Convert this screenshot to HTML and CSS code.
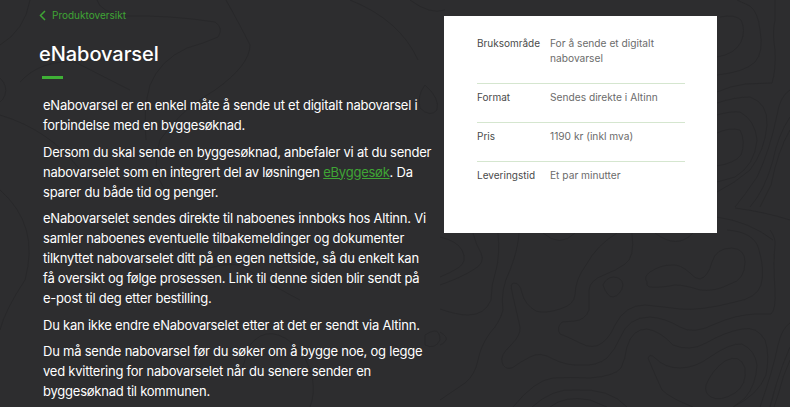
FILE: index.html
```html
<!DOCTYPE html>
<html lang="no">
<head>
<meta charset="utf-8">
<title>eNabovarsel</title>
<link rel="stylesheet" href="styles.css">
</head>
<body>
<svg class="topo" viewBox="0 0 790 407" width="790" height="407" aria-hidden="true">
<path d="M440 237Q457 241 462 250Q468 262 458 268Q450 273 440 277"/>
<path d="M473 233Q476 245 481 253Q486 263 473 270Q460 278 440 285"/>
<path d="M498 233Q500 255 496 270Q491 285 491 300Q485 315 468 315Q457 315 440 309"/>
<path d="M519 233Q518 250 510 270Q500 290 503 310Q500 322 490 333Q481 345 478 360Q475 375 465 383L440 400"/>
<path d="M440 332Q448 337 446 340Q444 344 440 345"/>
<path d="M543 233Q560 248 575 233"/>
<path d="M655 233Q677 250 693 233"/>
<path d="M617 233Q597 245 586 265Q575 280 575 295Q574 305 560 309Q545 314 536 311Q525 305 522 293Q520 283 514 283Q510 283 512 292L520 327Q521 335 511 345Q500 355 502 362Q504 370 512 368Q520 362 530 357Q540 351 553 359Q567 366 582 365Q597 366 607 358Q615 350 620 338Q628 317 650 317Q665 318 680 327Q693 335 715 324Q735 315 755 314L771 314Q776 310 775 290Q773 262 775 245Q776 238 770 230"/>
<path d="M632 233Q635 258 625 264Q617 270 604 275Q590 280 589 290L589 310Q585 320 575 321L562 322Q556 328 560 334Q566 336 580 343Q593 350 602 343Q610 337 615 325Q625 305 645 305Q665 307 680 309Q700 311 735 302Q757 298 761 285Q765 270 759 250Q755 232 727 230"/>
<path d="M513 407Q535 380 553 378Q570 377 590 378Q615 376 621 368Q625 360 627 347Q632 329 647 329Q660 331 673 345Q690 352 706 343Q725 332 742 329Q757 326 765 340Q770 355 766 375Q758 395 733 407"/>
<path d="M693 407Q670 398 662 390Q655 375 648 358Q650 353 655 358Q665 368 680 368Q695 368 710 357Q730 343 742 344Q755 350 757 365Q756 385 745 398L733 407"/>
<path d="M706 385Q712 370 725 361Q740 353 745 368Q747 385 735 393Q720 402 711 397Q704 393 706 385Z"/>
<path d="M647 282Q643 277 650 272Q660 265 672 265Q680 264 690 273Q695 279 700 279Q708 277 712 262Q716 248 732 248Q745 249 745 262Q745 280 730 284Q715 292 700 290Q685 285 675 285Q660 288 650 287Q646 286 647 282Z"/>
<path d="M603 285Q606 278 613 277Q622 277 623 285Q621 295 613 297Q607 297 603 285Z"/>
<path d="M790 323Q782 328 778 345Q773 370 760 407"/>
<path d="M790 347Q782 365 776 385L770 407"/>
<path d="M790 360Q783 375 778 395L774 407"/>
<path d="M532 407Q553 388 575 390Q610 388 627 407"/>
<path d="M550 407Q565 395 590 400L607 407"/>
<path d="M717 57Q735 54 741 42Q746 30 741 20Q735 14 720 17"/>
<path d="M717 75Q745 72 755 62Q764 52 760 30Q758 12 750 6L737 0"/>
<path d="M717 92Q730 86 745 84L772 83Q776 70 775 50Q772 33 775 20L775 0"/>
<path d="M717 103Q735 97 750 97Q768 103 767 125Q765 150 750 170Q735 183 717 192"/>
<path d="M717 115Q730 111 740 112Q755 120 757 140Q755 165 735 177L717 182"/>
<path d="M717 133Q730 127 740 130Q746 142 741 155Q735 163 717 166"/>
<path d="M790 90Q780 96 777 115Q770 150 757 177Q745 195 735 207"/>
<path d="M790 117Q778 135 773 160Q765 190 750 207"/>
<path d="M790 130Q778 150 771 185L760 207"/>
<path d="M735 208Q765 212 790 220"/>
<path d="M717 217Q750 222 773 240"/>
<path d="M97 0Q100 12 125 16Q170 15 215 22Q224 28 218 37Q205 43 187 48Q160 60 150 85Q143 110 146 140"/>
<path d="M226 0Q240 25 250 45Q250 65 215 90Q180 110 160 140Q150 170 165 190"/>
<path d="M0 78Q8 86 5 95Q3 100 0 102"/>
<path d="M20 82Q40 60 75 62Q110 80 130 90"/>
<path d="M350 0Q400 20 418 60"/>
<path d="M0 115Q50 130 80 170"/>
<path d="M0 190Q40 225 25 280Q5 310 0 330"/>
<path d="M30 0Q25 30 0 45"/>
<path d="M410 0Q430 15 445 10"/>
<path d="M425 85Q440 98 437 110Q430 118 420 108Q417 95 425 85Z"/>
<path d="M310 407Q320 380 300 350Q270 320 250 345L240 375"/>
<path d="M425 335Q440 325 440 340Q435 350 425 345Z"/>
<path d="M170 300Q200 260 240 265Q280 290 300 300"/>
</svg>
<main class="page">
<section class="col-main">
<a class="back" href="#"><svg class="chev" viewBox="0 0 7 11" width="7" height="11"><path d="M6 1L1.5 5.5L6 10"/></svg>Produktoversikt</a>
<h1>eNabovarsel</h1>
<div class="rule"></div>
<div class="body">
<p>eNabovarsel er en enkel måte å sende ut et digitalt nabovarsel i forbindelse med en byggesøknad.</p>
<p>Dersom du skal sende en byggesøknad, anbefaler vi at du sender nabovarselet som en integrert del av løsningen <a href="#">eByggesøk</a>. Da sparer du både tid og penger.</p>
<p>eNabovarselet sendes direkte til naboenes innboks hos Altinn. Vi samler naboenes eventuelle tilbakemeldinger og dokumenter tilknyttet nabovarselet ditt på en egen nettside, så du enkelt kan få oversikt og følge prosessen. Link til denne siden blir sendt på e-post til deg etter bestilling.</p>
<p>Du kan ikke endre eNabovarselet etter at det er sendt via Altinn.</p>
<p>Du må sende nabovarsel før du søker om å bygge noe, og legge ved kvittering for nabovarselet når du senere sender en byggesøknad til kommunen.</p>
</div>
</section>
<aside class="card">
<div class="row"><span class="k">Bruksområde</span><span class="v">For å sende et digitalt nabovarsel</span></div>
<div class="row"><span class="k">Format</span><span class="v">Sendes direkte i Altinn</span></div>
<div class="row"><span class="k">Pris</span><span class="v">1190 kr (inkl mva)</span></div>
<div class="row"><span class="k">Leveringstid</span><span class="v">Et par minutter</span></div>
</aside>
</main>
</body>
</html>
```
FILE: styles.css
```css
html, body { margin: 0; padding: 0; height: 407px; overflow: hidden; }
body { background: #2d2d2f; font-family: Inter, "Noto Sans", sans-serif; color: #fff; position: relative; }
.topo { position: absolute; left: 0; top: 0; }
.topo path { fill: none; stroke: #28282a; stroke-width: 1; }
.page { position: relative; display: flex; align-items: flex-start; padding: 0 0 0 39px; }
.col-main { width: 405px; flex: none; }
.back { display: flex; align-items: center; gap: 6px; height: 16px; margin-top: 7px; color: #3fa535; font-size: 10px; text-decoration: none; }
.chev { flex: none; }
.chev path { fill: none; stroke: #3fa535; stroke-width: 1.5; }
h1 { margin: 17px 0 0; font-size: 20px; line-height: 28px; font-weight: 500; letter-spacing: -0.05px; }
.rule { width: 21px; height: 3px; background: #3fb036; margin: 8px 0 0 3px; }
.body { margin: 16px 0 0 4px; width: 389.5px; font-size: 13px; line-height: 20px; letter-spacing: -0.23px; }
.body p { margin: 0 0 6.5px; }
.body a { color: #3fa535; }
.card { flex: none; width: 273px; height: 217px; margin: 16px 0 0 0; background: #fff; padding: 20px 32px 0 33px; box-sizing: border-box; font-size: 10.2px; }
.row { display: flex; line-height: 15px; padding-bottom: 17px; margin-bottom: 6px; border-bottom: 1px solid #d5e6cf; }
.row:last-child { border: 0; }
.k { width: 73px; flex: none; color: #4a4a4a; font-size: 10px; }
.v { color: #6b6b6b; }
```
